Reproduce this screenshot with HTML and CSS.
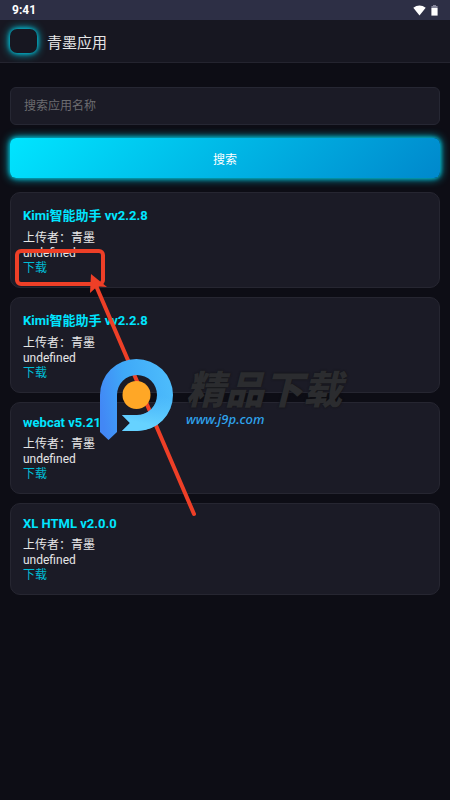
FILE: index.html
```html
<!DOCTYPE html>
<html lang="zh-CN">

<head>
    <meta charset="UTF-8">
    <meta name="viewport" content="width=device-width, initial-scale=1.0">
    <title>青墨应用</title>
    <link rel="stylesheet" href="styles.css">
</head>

<body>
    <div class="status-bar">
        <span>9:41</span>
        <div class="status-icons">
            <svg width="13" height="11" viewBox="0 0 13 11"><path d="M0.3 2.8 Q6.5 -2 12.7 2.8 L6.5 10.6 Z" fill="#fff"/></svg>
            <svg width="7" height="11" viewBox="0 0 7 11"><path d="M2 0h3v1h1.6v2H0.4V1H2z" fill="#85869a"/><path d="M0.4 3h6.2v7.6H0.4z" fill="#fff"/></svg>
        </div>
    </div>

    <header class="header">
        <div class="logo"></div>
        <h1>青墨应用</h1>
    </header>

    <main class="container">
        <form class="search-form">
            <input type="text" class="search-input" placeholder="搜索应用名称" aria-label="搜索应用名称">
            <button type="submit" class="search-btn">搜索</button>
        </form>

        <div class="app-list">
            <div class="app-card">
                <h2>Kimi智能助手 vv2.2.8</h2>
                <p>上传者：青墨</p>
                <p>undefined</p>
                <a href="#">下载</a>
            </div>
            <div class="app-card">
                <h2>Kimi智能助手 vv2.2.8</h2>
                <p>上传者：青墨</p>
                <p>undefined</p>
                <a href="#">下载</a>
            </div>
            <div class="app-card">
                <h2>webcat v5.21</h2>
                <p>上传者：青墨</p>
                <p>undefined</p>
                <a href="#">下载</a>
            </div>
            <div class="app-card">
                <h2>XL HTML v2.0.0</h2>
                <p>上传者：青墨</p>
                <p>undefined</p>
                <a href="#">下载</a>
            </div>
        </div>
    </main>

    <!-- red marker around the download link -->
    <svg class="marker" width="200" height="280" viewBox="0 0 200 280">
        <rect x="7" y="11" width="86" height="33" rx="4" fill="none" stroke="#ee3f27" stroke-width="4"/>
        <path d="M87 48 L184 274" stroke="#ee3f27" stroke-width="4" stroke-linecap="round"/>
        <path d="M81 34 L97 47 L89.500 46.500 L85.500 48 L80 53 Z" fill="#ee3f27"/>
    </svg>

    <div class="watermark">
        <svg width="74" height="82" viewBox="0 0 74 82">
            <defs>
                <linearGradient id="mark" x1="0" y1="0.6" x2="1" y2="0.4">
                    <stop offset="0" stop-color="#4287f5"/>
                    <stop offset="0.4" stop-color="#3fa9f8"/>
                    <stop offset="1" stop-color="#4dbcfb"/>
                </linearGradient>
                <linearGradient id="tail" x1="0.7" y1="0" x2="0.4" y2="1">
                    <stop offset="0" stop-color="#5fcdff" stop-opacity="0"/>
                    <stop offset="0.8" stop-color="#66d2ff"/>
                </linearGradient>
            </defs>
            <path d="M0 73 V36 A36.500 36 0 1 1 37 72 H22 L30 64 L22 56 H37 A20 20 0 1 0 17 36 V73 L8.500 81 Z" fill="url(#mark)"/>
            <path d="M73 36 A36 36 0 0 1 37 72 H22 L30 64 L22 56 H37 A20 20 0 0 0 57 36 Z" fill="url(#tail)"/>
            <circle cx="36.500" cy="36" r="14" fill="#ffa726"/>
        </svg>
        <div class="watermark-text">
            <strong>精品下载</strong>
            <span>www.j9p.com</span>
        </div>
    </div>
</body>

</html>
```
FILE: styles.css
```css
* {
    box-sizing: border-box;
    margin: 0;
    padding: 0;
}

body {
    position: relative;
    min-height: 100vh;
    background-color: #0d0d15;
    color: #e6e6e6;
    font-family: Roboto, "Noto Sans CJK SC", sans-serif;
    font-size: 12px;
}

.status-bar {
    display: flex;
    justify-content: space-between;
    align-items: center;
    height: 20px;
    padding: 0 12px;
    background-color: #2d2f45;
    color: #fff;
    font-weight: bold;
}

.status-icons {
    display: flex;
    align-items: center;
    gap: 5px;
}

.status-icons svg {
    display: block;
}

.header {
    display: flex;
    align-items: center;
    gap: 10px;
    height: 43px;
    padding: 0 10px;
    background-color: #171721;
    border-bottom: 1px solid #24242f;
}

.header h1 {
    font-size: 15px;
    font-weight: normal;
}

.logo {
    width: 27px;
    height: 24px;
    border-radius: 7px;
    background-color: #171721;
    box-shadow: 0 0 4px #00bcd4, 0 0 10px #00e5ff;
}

.container {
    padding: 24px 10px;
}

.search-form {
    display: flex;
    flex-direction: column;
    gap: 13px;
}

.search-input {
    width: 100%;
    height: 38px;
    padding: 0 13px;
    border: 1px solid #262733;
    border-radius: 6px;
    background-color: #1b1b26;
    color: #e6e6e6;
    font: inherit;
}

.search-input::placeholder {
    color: #6c6c70;
}

.search-btn {
    width: 100%;
    height: 40px;
    border: none;
    border-radius: 6px;
    background: linear-gradient(135deg, #00e5ff, #0088cc);
    box-shadow: 0 0 4px #00bcd4, 0 0 10px #00e5ff;
    color: #fff;
    font: inherit;
    cursor: pointer;
}

.app-list {
    display: flex;
    flex-direction: column;
    gap: 9px;
    margin-top: 14px;
}

.app-card {
    padding: 12px 12px 11px;
    border: 1px solid #262631;
    border-radius: 10px;
    background-color: #1b1b26;
    line-height: 15px;
}

.app-card h2 {
    margin-bottom: 7px;
    color: #00e5ff;
    font-size: 13px;
    line-height: normal;
}

.app-card a {
    display: block;
    color: #00bcd4;
    text-decoration: none;
}

.marker {
    position: absolute;
    top: 240px;
    left: 10px;
    pointer-events: none;
}

.watermark {
    position: absolute;
    top: 359px;
    left: 100px;
    display: flex;
    gap: 12px;
    pointer-events: none;
}

.watermark-text {
    display: flex;
    flex-direction: column;
    padding-top: 12px;
    font-style: italic;
}

.watermark-text strong {
    color: #2b2c2f;
    font-size: 39px;
    font-weight: 900;
    line-height: 41px;
    text-shadow: 0 0 2px #111;
}

.watermark-text span {
    color: #2fa3ec;
    font-family: "Noto Sans", sans-serif;
    font-size: 13px;
    font-weight: 500;
    line-height: 15px;
}
```
